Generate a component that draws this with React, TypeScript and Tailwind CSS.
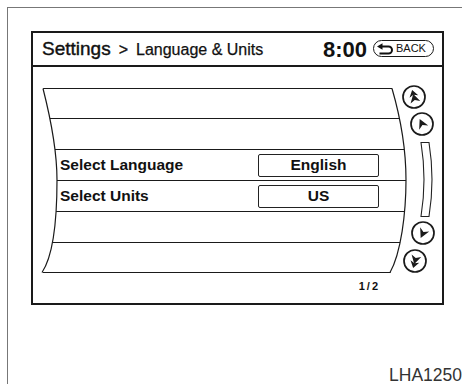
import React from "react";

const LEFT_CURVE = "M1,0.5 C8,28 15,60 15,92 C15,125 13,165 0,184.5";
const RIGHT_CURVE = "M350,0.5 C358,28 364,60 364,92 C364,125 359,165 348,184.5";

function ScrollBtn({ kind }: { kind: "up2" | "up" | "down" | "down2" }) {
  const rot = kind === "up2" ? -15 : kind === "up" ? -25 : kind === "down" ? 25 : 15;
  return (
    <svg width="24" height="24" viewBox="0 0 24 24" className="block">
      <circle cx="12" cy="12" r="11" fill="white" stroke="#1a1a1a" strokeWidth="1.7" />
      <g transform={`rotate(${rot} 12 12)`} fill="#1a1a1a">
        {kind === "up" && <path d="M12,6.5 L17,16 L12,13 L7,16 Z" />}
        {kind === "down" && <path d="M12,17.5 L17,8 L12,11 L7,8 Z" />}
        {kind === "up2" && (
          <>
            <path d="M12,4.8 L16.5,11.5 L12,9.6 L7.5,11.5 Z" />
            <path d="M12,9 L17,17.5 L12,15 L7,17.5 Z" />
          </>
        )}
        {kind === "down2" && (
          <>
            <path d="M12,19.2 L16.5,12.5 L12,14.4 L7.5,12.5 Z" />
            <path d="M12,15 L17,6.5 L12,9 L7,6.5 Z" />
          </>
        )}
      </g>
    </svg>
  );
}

function ValueBox({ children }: { children: React.ReactNode }) {
  return (
    <div className="ml-auto mr-[28px] w-[121px] h-[23px] border-[1.5px] border-[#222] rounded-[2px] flex items-center justify-center text-[15.5px] font-bold leading-none">
      {children}
    </div>
  );
}

export default function App() {
  return (
    <div className="w-[462px] h-[384px] bg-white pt-[7px] pl-[7px] font-['Liberation_Sans',Arial,sans-serif] text-[#111] overflow-hidden">
      <div className="w-[455px] h-[377px] border-l border-t border-[#777] pt-[23px] pl-[23px] flex flex-col">
        <div className="w-[413px] h-[274px] border-2 border-[#1a1a1a] flex flex-col">
          {/* Header */}
          <div className="h-[34px] border-b-2 border-[#1a1a1a] flex items-center justify-between pl-[9px] pr-[8px] pt-[2px]">
            <div className="flex items-baseline">
              <span className="text-[19px] leading-[22px] [-webkit-text-stroke:0.4px_#111]">Settings</span>
              <span className="text-[16px] mx-[8px] [-webkit-text-stroke:0.3px_#111]">&gt;</span>
              <span className="text-[16px] [-webkit-text-stroke:0.25px_#111]">Language &amp; Units</span>
            </div>
            <div className="flex items-center gap-[6px]">
              <span className="text-[22px] font-bold leading-none">8:00</span>
              <div className="w-[61px] h-[17px] rounded-full border-[1.5px] border-[#1a1a1a] flex items-center pl-[2px] -mt-[3px]">
                <svg width="18" height="12" viewBox="0 0 18 12" className="block">
                  <path d="M1,3.5 L6.5,0.3 L6.5,6.7 Z" fill="#111" />
                  <path d="M5,3.5 H12.5 A3.5,3.5 0 0 1 12.5,10.5 H3.5" fill="none" stroke="#111" strokeWidth="2" />
                </svg>
                <span className="ml-[2px] text-[11px] leading-none">BACK</span>
              </div>
            </div>
          </div>
          {/* Body */}
          <div className="flex items-start">
            <div className="ml-[9px] mt-[21px] w-[365px] flex flex-col">
              <div className="relative w-[365px] h-[185px]">
                <div className="h-full flex flex-col [clip-path:path('M1,0L350,0C358,28,364,60,364,92C364,125,359,165,348,186L0,186C13,165,15,125,15,92C15,60,8,28,1,0Z')]">
                  <div className="h-[30px] border-t border-[#1a1a1a]" />
                  <div className="h-[31px] border-t border-[#1a1a1a]" />
                  <div className="h-[31px] border-t border-[#1a1a1a] flex items-center pl-[18px]">
                    <span className="text-[15.5px] font-bold leading-none">Select Language</span>
                    <ValueBox>English</ValueBox>
                  </div>
                  <div className="h-[31px] border-t border-[#1a1a1a] flex items-center pl-[18px]">
                    <span className="text-[15.5px] font-bold leading-none">Select Units</span>
                    <ValueBox>US</ValueBox>
                  </div>
                  <div className="h-[31px] border-t border-[#1a1a1a]" />
                  <div className="h-[31px] border-y border-[#1a1a1a]" />
                </div>
                <svg className="absolute inset-0 overflow-visible pointer-events-none" width="365" height="185" viewBox="0 0 365 185">
                  <path d={LEFT_CURVE} fill="none" stroke="#1a1a1a" strokeWidth="1.2" />
                  <path d={RIGHT_CURVE} fill="none" stroke="#1a1a1a" strokeWidth="1.2" />
                </svg>
              </div>
              <div className="mt-[7px] flex justify-end pr-[27px]">
                <span className="text-[11px] font-bold leading-[13px] tracking-[2px]">1/2</span>
              </div>
            </div>
            <div className="-ml-[7px] mt-[18px] w-[36px] flex flex-col">
              <div className="ml-[2px]"><ScrollBtn kind="up2" /></div>
              <div className="mt-[3px] ml-[10px]"><ScrollBtn kind="up" /></div>
              <div className="mt-[6px] ml-[20px]">
                <svg width="14" height="75" viewBox="0 0 14 75" className="block">
                  <path d="M1,0.5 Q7,37.5 1,74.5 H9 Q15,37.5 9,0.5 Z" fill="white" stroke="#222" strokeWidth="1.1" />
                </svg>
              </div>
              <div className="mt-[4px] ml-[11px]"><ScrollBtn kind="down" /></div>
              <div className="mt-[4px] ml-[3px]"><ScrollBtn kind="down2" /></div>
            </div>
          </div>
        </div>
        <div className="mt-auto flex justify-end">
          <span className="text-[17.5px] leading-[18px] text-[#333]">LHA1250</span>
        </div>
      </div>
    </div>
  );
}
